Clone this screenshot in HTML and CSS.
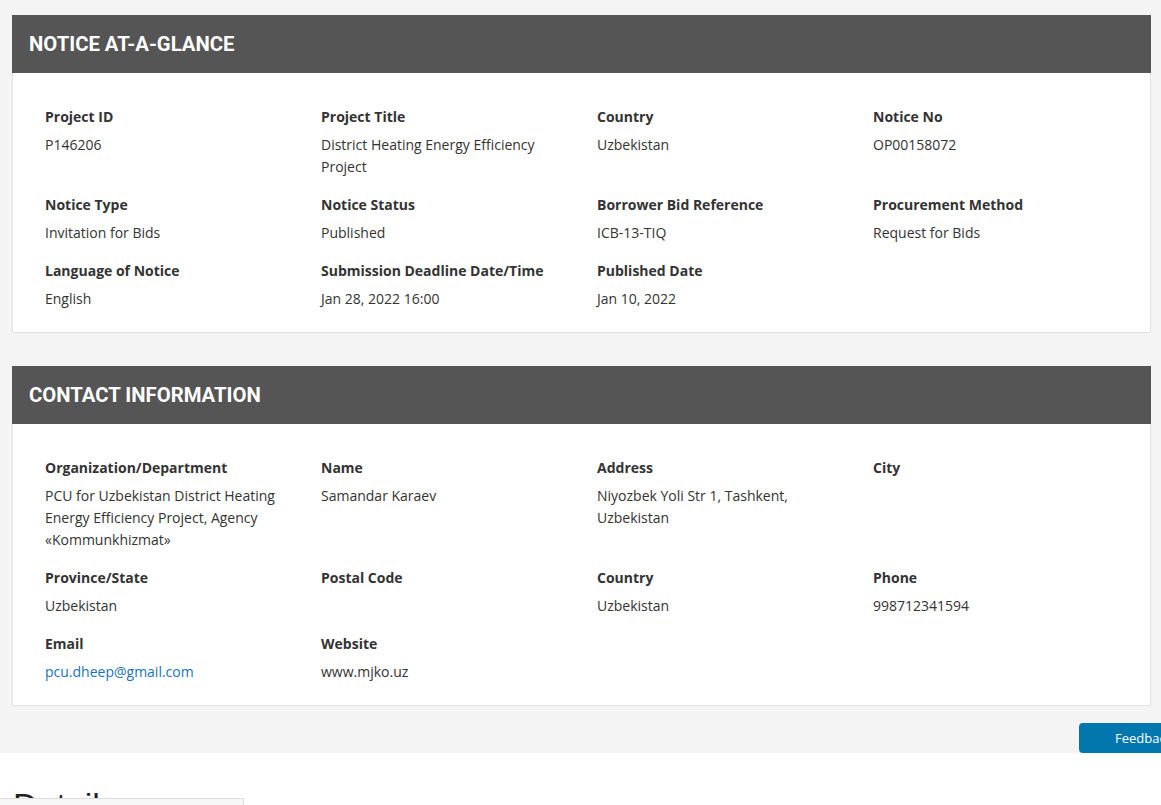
FILE: index.html
```html
<!DOCTYPE html>
<html lang="en">
<head>
<meta charset="utf-8">
<title>Notice</title>
<link rel="stylesheet" href="styles.css">
</head>
<body>
<div class="top">
  <section class="card">
    <h2 class="card-head">NOTICE AT-A-GLANCE</h2>
    <div class="card-body">
      <div class="field"><div class="lbl">Project ID</div><div class="val">P146206</div></div>
      <div class="field"><div class="lbl">Project Title</div><div class="val">District Heating Energy Efficiency Project</div></div>
      <div class="field"><div class="lbl">Country</div><div class="val">Uzbekistan</div></div>
      <div class="field"><div class="lbl">Notice No</div><div class="val">OP00158072</div></div>
      <div class="field"><div class="lbl">Notice Type</div><div class="val">Invitation for Bids</div></div>
      <div class="field"><div class="lbl">Notice Status</div><div class="val">Published</div></div>
      <div class="field"><div class="lbl">Borrower Bid Reference</div><div class="val">ICB-13-TIQ</div></div>
      <div class="field"><div class="lbl">Procurement Method</div><div class="val">Request for Bids</div></div>
      <div class="field"><div class="lbl">Language of Notice</div><div class="val">English</div></div>
      <div class="field"><div class="lbl">Submission Deadline Date/Time</div><div class="val">Jan 28, 2022 16:00</div></div>
      <div class="field"><div class="lbl">Published Date</div><div class="val">Jan 10, 2022</div></div>
    </div>
  </section>
  <section class="card">
    <h2 class="card-head">CONTACT INFORMATION</h2>
    <div class="card-body">
      <div class="field"><div class="lbl">Organization/Department</div><div class="val">PCU for Uzbekistan District Heating Energy Efficiency Project, Agency «Kommunkhizmat»</div></div>
      <div class="field"><div class="lbl">Name</div><div class="val">Samandar Karaev</div></div>
      <div class="field"><div class="lbl">Address</div><div class="val">Niyozbek Yoli Str 1, Tashkent, Uzbekistan</div></div>
      <div class="field"><div class="lbl">City</div><div class="val"></div></div>
      <div class="field"><div class="lbl">Province/State</div><div class="val">Uzbekistan</div></div>
      <div class="field"><div class="lbl">Postal Code</div><div class="val"></div></div>
      <div class="field"><div class="lbl">Country</div><div class="val">Uzbekistan</div></div>
      <div class="field"><div class="lbl">Phone</div><div class="val">998712341594</div></div>
      <div class="field"><div class="lbl">Email</div><div class="val"><a class="link" href="#">pcu.dheep@gmail.com</a></div></div>
      <div class="field"><div class="lbl">Website</div><div class="val">www.mjko.uz</div></div>
    </div>
  </section>
  <a class="feedback" href="#">Feedback</a>
</div>
<h2 class="details">Details</h2>
<div class="overlay-box"></div>
</body>
</html>
```

FILE: styles.css
```css
html, body {
  margin: 0;
  padding: 0;
  background: #ffffff;
  overflow: hidden;
}
body {
  font-family: "Open Sans", "Liberation Sans", sans-serif;
  color: #333333;
  font-size: 14px;
  width: 1161px;
  height: 805px;
  position: relative;
}
.top {
  background: #f4f4f4;
  padding: 15px 10px 48px 12px;
  position: relative;
  height: 690px;
}
.card {
  background: #ffffff;
  border: 1px solid #e2e2e2;
  border-top: none;
  width: 1137px;
  margin-bottom: 33px;
}
.card:last-of-type {
  margin-bottom: 0;
}
.card-head {
  background: #555555;
  color: #ffffff;
  font-family: Roboto, "Liberation Sans", sans-serif;
  font-weight: 700;
  font-size: 20.3px;
  height: 58px;
  line-height: 58px;
  padding: 0 17px;
  margin: 0 -1px;
}
.card-body {
  display: grid;
  grid-template-columns: repeat(4, 276px);
  padding: 33px 16px 6px 16px;
}
.field {
  padding: 0 16px;
  margin-bottom: 16px;
}
.lbl {
  font-weight: 700;
  line-height: 22px;
  color: #333333;
  margin-bottom: 6px;
}
.val {
  line-height: 22px;
  color: #333333;
  min-height: 22px;
}
.link {
  color: #1a73b8;
  text-decoration: none;
}
.feedback {
  position: absolute;
  left: 1079px;
  top: 723px;
  width: 120px;
  height: 30px;
  background: #0277ad;
  color: #ffffff;
  border-radius: 4px;
  font-size: 13px;
  line-height: 30px;
  padding-left: 36px;
  text-decoration: none;
  box-sizing: border-box;
}
.details {
  margin: 0;
  padding: 32px 0 0 13px;
  font-family: "Liberation Sans", Arial, sans-serif;
  font-weight: 400;
  font-size: 34px;
  line-height: 40px;
  color: #222222;
}
.overlay-box {
  position: absolute;
  left: 0;
  top: 798px;
  width: 243px;
  height: 20px;
  background: #f7f7f7;
  border-top: 1px solid #dddddd;
  border-right: 1px solid #dddddd;
}
```
